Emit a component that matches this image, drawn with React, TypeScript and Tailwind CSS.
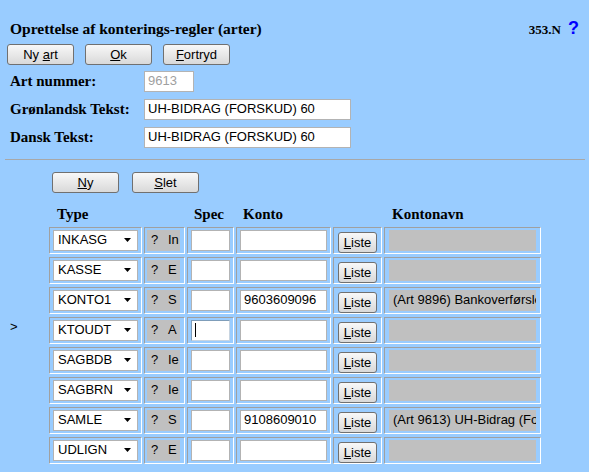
const serif = "font-['Liberation_Serif','Times_New_Roman',serif]"

const rows = [
  { type: 'INKASG', code: 'In', konto: '', navn: '' },
  { type: 'KASSE', code: 'E', konto: '', navn: '' },
  { type: 'KONTO1', code: 'S', konto: '9603609096', navn: '(Art 9896) Bankoverførsler' },
  { type: 'KTOUDT', code: 'A', konto: '', navn: '', current: true },
  { type: 'SAGBDB', code: 'Ie', konto: '', navn: '' },
  { type: 'SAGBRN', code: 'Ie', konto: '', navn: '' },
  { type: 'SAMLE', code: 'S', konto: '9108609010', navn: '(Art 9613) UH-Bidrag (Forskud) 60' },
  { type: 'UDLIGN', code: 'E', konto: '', navn: '' },
]

const cell =
  'h-[27px] shrink-0 border border-[#a0a0a0] border-r-white border-b-white py-[2px]'

function Btn({
  children,
  className = '',
}: {
  children: React.ReactNode
  className?: string
}) {
  return (
    <button
      className={`h-[21px] rounded-[3px] border border-[#707070] bg-linear-to-b from-[#f8f8f8] to-[#d9d9d9] text-[13px] leading-none text-black ${className}`}
    >
      {children}
    </button>
  )
}

function Field({ value, className = '' }: { value: string; className?: string }) {
  return (
    <div
      className={`flex h-[21px] items-center overflow-hidden whitespace-nowrap border border-[#b3b3b3] bg-white pl-[3px] text-[13px] ${className}`}
    >
      {value}
    </div>
  )
}

export default function App() {
  return (
    <div className="min-h-screen bg-[#99ccff] font-['Liberation_Sans',Arial,sans-serif] text-black">
      <div className="flex items-baseline justify-between pl-[10px] pr-[10px] pt-[19px]">
        <h1 className={`${serif} text-[15.5px] font-bold leading-[17px]`}>
          Oprettelse af konterings-regler (arter)
        </h1>

        <div className="flex items-baseline gap-[7px]">
          <span className={`${serif} text-[13px] font-bold`}>353.N</span>
          <span className="text-[18px] font-bold leading-none text-[#0000ff]">?</span>
        </div>
      </div>

      <div className="mt-[4px] flex gap-[11px] pl-[7px]">
        <Btn className="w-[67px]">
          Ny <u>a</u>rt
        </Btn>
        <Btn className="w-[67px]">
          <u>O</u>k
        </Btn>
        <Btn className="w-[67px]">
          <u>F</u>ortryd
        </Btn>
      </div>

      <div className="mt-[6px] flex flex-col gap-[7px] pl-[10px]">
        <div className="flex items-center">
          <span className={`${serif} w-[134px] text-[15px] font-bold leading-[17px]`}>
            Art nummer:
          </span>
          <Field value="9613" className="w-[50px] text-[#a0a0a0]" />
        </div>

        <div className="flex items-center">
          <span className={`${serif} w-[134px] text-[15px] font-bold leading-[17px]`}>
            Grønlandsk Tekst:
          </span>
          <Field value="UH-BIDRAG (FORSKUD) 60" className="w-[207px]" />
        </div>

        <div className="flex items-center">
          <span className={`${serif} w-[134px] text-[15px] font-bold leading-[17px]`}>
            Dansk Tekst:
          </span>
          <Field value="UH-BIDRAG (FORSKUD) 60" className="w-[207px]" />
        </div>
      </div>

      <div className="ml-[5px] mr-[4px] mt-[11px] border-t border-[#a8a8a8]" />

      <div className="mt-[12px] flex gap-[13px] pl-[52px]">
        <Btn className="w-[67px]">
          <u>N</u>y
        </Btn>
        <Btn className="w-[67px]">
          <u>S</u>let
        </Btn>
      </div>

      <div className={`${serif} mt-[13px] flex pl-[49px] text-[15px] font-bold leading-[17px]`}>
        <span className="w-[138px] pl-[8px]">Type</span>
        <span className="w-[49px] pl-[7px]">Spec</span>
        <span className="w-[148px] pl-[7px]">Konto</span>
        <span className="pl-[8px]">Kontonavn</span>
      </div>

      <div className="mt-[4px] flex flex-col gap-[3px]">
        {rows.map((row) => (
          <div key={row.type} className="flex">
            <div className="w-[49px] shrink-0 pl-[10px] text-[13px]">
              {row.current ? '>' : ''}
            </div>

            <div className="flex gap-[2px]">
              <div className={`${cell} w-[93px] px-[3px]`}>
                <div className="flex h-[21px] items-center justify-between border border-[#b3b3b3] bg-white pl-[4px] pr-[6px] text-[13px]">
                  <span>{row.type}</span>
                  <svg width="7" height="4" viewBox="0 0 7 4">
                    <polygon points="0,0 7,0 3.5,4" fill="#000" />
                  </svg>
                </div>
              </div>

              <div className={`${cell} w-[41px] pl-[2px] pr-[4px]`}>
                <div className="flex h-[21px] items-center overflow-hidden whitespace-nowrap bg-[#c0c0c0] pl-[4px] text-[13px]">
                  <span className="w-[17px] shrink-0">?</span>
                  <span>{row.code}</span>
                </div>
              </div>

              <div className={`${cell} w-[47px] px-[3px]`}>
                {row.current ? (
                  <div className="flex h-[21px] items-center border border-[#7f9db9] border-b-[#c8d4e0] border-r-[#c8d4e0] bg-white pl-[3px]">
                    <span className="h-[14px] w-px bg-black" />
                  </div>
                ) : (
                  <Field value="" className="w-full" />
                )}
              </div>

              <div className={`${cell} w-[95px] px-[3px]`}>
                <Field value={row.konto} className="w-full" />
              </div>

              <div className={`${cell} w-[49px] pl-[4px]`}>
                <Btn className="w-[39px]">
                  <u>L</u>iste
                </Btn>
              </div>

              <div className={`${cell} w-[157px] pl-[4px] pr-[4px]`}>
                <div className="flex h-[21px] items-center overflow-hidden whitespace-nowrap bg-[#c0c0c0] pl-[4px] text-[13px]">
                  {row.navn}
                </div>
              </div>
            </div>
          </div>
        ))}
      </div>
    </div>
  )
}
